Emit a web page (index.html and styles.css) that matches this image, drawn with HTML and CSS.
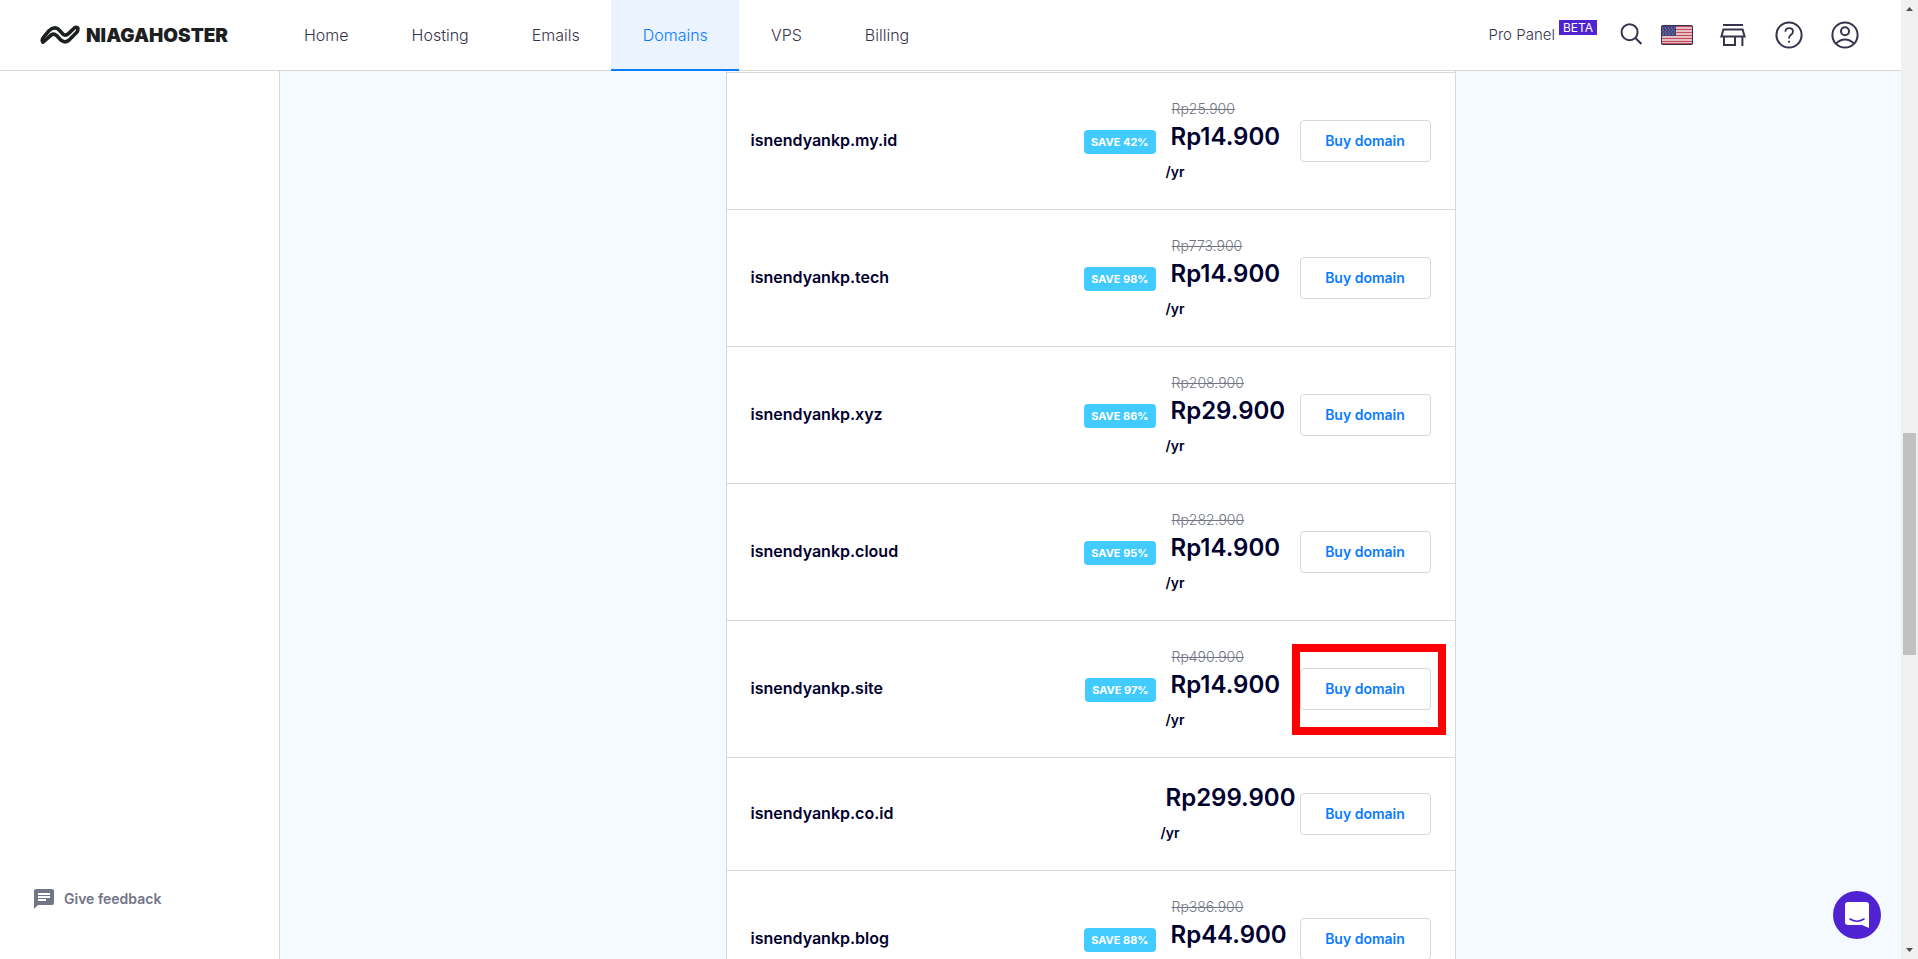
FILE: index.html
```html
<!DOCTYPE html>
<html lang="en">
<head>
<meta charset="utf-8">
<title>Niagahoster - Domains</title>
<link rel="stylesheet" href="styles.css">
</head>
<body>
<div class="app">
  <header class="header">
    <a class="logo" href="#" aria-label="Niagahoster">
      <svg class="logo-mark" viewBox="0 0 40 20" fill="none" stroke="#1d2021" stroke-width="3.6" stroke-linecap="round" stroke-linejoin="round">
        <path d="M2.200 15.400Q2 14 4 11.600L9 5.800Q14 .6 18.600 4.400L23.400 9.400Q25.800 11 28.200 8.800L34.600 2.800Q36 2 37.600 3"/>
        <path d="M3 17.200 11.400 9.800Q14 8.200 16.600 10.600L21 15.200Q25.400 18.600 29.600 14.600L36.600 7.600Q38.400 5.400 37.600 3"/>
      </svg>
      <span class="logo-text">NIAGAHOSTER</span>
    </a>
    <nav class="nav">
      <a class="nav-item" href="#">Home</a>
      <a class="nav-item" href="#">Hosting</a>
      <a class="nav-item" href="#">Emails</a>
      <a class="nav-item nav-item-active" href="#">Domains</a>
      <a class="nav-item" href="#">VPS</a>
      <a class="nav-item" href="#">Billing</a>
    </nav>
    <div class="tools">
      <a class="pro" href="#">Pro Panel <span class="beta">BETA</span></a>
      <button class="tool tool-search" type="button" aria-label="Search">
        <svg viewBox="0 0 28 28" fill="none" stroke="#36344d" stroke-width="2"><circle cx="12.6" cy="11.2" r="8"/><path d="m18.4 17 6 6"/></svg>
      </button>
      <button class="tool tool-flag" type="button" aria-label="Language">
        <svg viewBox="0 0 32 20">
          <rect width="32" height="20" rx="2" fill="#f3e3e6"/>
          <path stroke="#c34c5c" stroke-width="1.5" d="M0 1.6h32M0 4.6h32M0 7.6h32M0 10.6h32M0 13.6h32M0 16.6h32M0 18.8h32"/>
          <path fill="#46467f" d="M0 1h15v10H0z"/>
          <path stroke="#8f8fb8" stroke-dasharray="1 2" d="M1 3h13M2 5h12M1 7h13M2 9h12"/>
          <rect x=".5" y=".5" width="31" height="19" rx="1.5" fill="none" stroke="#36344d"/>
        </svg>
      </button>
      <button class="tool tool-store" type="button" aria-label="Store">
        <svg viewBox="0 0 28 28" fill="none" stroke="#36344d" stroke-width="2"><path d="M4 4h20M4.400 8.600h19.200l2 7H2.400zM5 15.600V24h11v-8.400M23.400 15.600V25"/></svg>
      </button>
      <button class="tool" type="button" aria-label="Help">
        <svg viewBox="0 0 28 28" fill="none" stroke="#36344d" stroke-width="2"><circle cx="14" cy="14" r="12.6"/><path stroke-width="1.8" d="M10.4 10.8Q10.4 7.2 14.2 7.2T18 10.6Q18 12.4 16 13.8T14 17.4M14 19.8v2"/></svg>
      </button>
      <button class="tool" type="button" aria-label="Account">
        <svg viewBox="0 0 28 28" fill="none" stroke="#36344d" stroke-width="2"><circle cx="14" cy="14" r="12.6"/><circle cx="14" cy="10.2" r="4"/><path d="M5.2 22.4Q9 18.4 14 18.4t8.8 4"/></svg>
      </button>
    </div>
  </header>

  <aside class="sidebar">
    <a class="feedback" href="#">
      <svg viewBox="0 0 20 20" width="20" height="20"><path fill="#727586" d="M2 0h16a2 2 0 0 1 2 2v12a2 2 0 0 1-2 2H4l-4 4V2a2 2 0 0 1 2-2z"/><path stroke="#fff" stroke-width="1.8" d="M4 5h12M4 8h12M4 11h8"/></svg>
      Give feedback
    </a>
  </aside>

  <main class="main">
    <ul class="domains">
      <li class="row">
        <span class="name">isnendyankp.my.id</span><span class="save">SAVE 42%</span>
        <div class="price"><s class="old">Rp25.900</s><strong class="now">Rp14.900</strong><span class="per">/yr</span></div>
        <div class="action"><button class="buy" type="button">Buy domain</button></div>
      </li>
      <li class="row">
        <span class="name">isnendyankp.tech</span><span class="save">SAVE 98%</span>
        <div class="price"><s class="old">Rp773.900</s><strong class="now">Rp14.900</strong><span class="per">/yr</span></div>
        <div class="action"><button class="buy" type="button">Buy domain</button></div>
      </li>
      <li class="row">
        <span class="name">isnendyankp.xyz</span><span class="save">SAVE 86%</span>
        <div class="price"><s class="old">Rp208.900</s><strong class="now">Rp29.900</strong><span class="per">/yr</span></div>
        <div class="action"><button class="buy" type="button">Buy domain</button></div>
      </li>
      <li class="row">
        <span class="name">isnendyankp.cloud</span><span class="save">SAVE 95%</span>
        <div class="price"><s class="old">Rp282.900</s><strong class="now">Rp14.900</strong><span class="per">/yr</span></div>
        <div class="action"><button class="buy" type="button">Buy domain</button></div>
      </li>
      <li class="row">
        <span class="name">isnendyankp.site</span><span class="save">SAVE 97%</span>
        <div class="price"><s class="old">Rp490.900</s><strong class="now">Rp14.900</strong><span class="per">/yr</span></div>
        <div class="action action-marked"><button class="buy" type="button">Buy domain</button></div>
      </li>
      <li class="row">
        <span class="name">isnendyankp.co.id</span>
        <div class="price price-plain"><strong class="now">Rp299.900</strong><span class="per">/yr</span></div>
        <div class="action"><button class="buy" type="button">Buy domain</button></div>
      </li>
      <li class="row">
        <span class="name">isnendyankp.blog</span><span class="save">SAVE 88%</span>
        <div class="price"><s class="old">Rp386.900</s><strong class="now">Rp44.900</strong></div>
        <div class="action"><button class="buy" type="button">Buy domain</button></div>
      </li>
    </ul>
  </main>

  <div class="scrollbar" aria-hidden="true">
    <svg class="arrow" viewBox="0 0 17 17"><path fill="#505050" d="M5 11h7L8.500 7z"/></svg>
    <div class="track"><div class="thumb"></div></div>
    <svg class="arrow" viewBox="0 0 17 17"><path fill="#505050" d="M5 6h7L8.500 10z"/></svg>
  </div>

  <button class="chat" type="button" aria-label="Open chat">
    <svg viewBox="0 0 48 48"><path fill="#fff" d="M15 11h18a3 3 0 0 1 3 3v23l-7-3H15a3 3 0 0 1-3-3V14a3 3 0 0 1 3-3z"/><path fill="none" stroke="#4f23d1" stroke-width="1.600" stroke-linecap="round" d="M17 28q7 4.600 14 0"/></svg>
  </button>
</div>
</body>
</html>
```
FILE: styles.css
```css
* {
  box-sizing: border-box;
}

body {
  margin: 0;
  font-family: Inter, "Liberation Sans", sans-serif;
  color: #00002e;
}

a {
  color: inherit;
  text-decoration: none;
}

button {
  font-family: inherit;
  cursor: pointer;
}

svg {
  display: block;
}

.app {
  display: grid;
  grid-template-columns: 280px 1fr 17px;
  grid-template-rows: auto 1fr;
  height: 100vh;
  overflow: hidden;
}

.header {
  grid-column: 1 / 3;
  display: flex;
  height: 71px;
  padding-right: 42px;
  border-bottom: 1px solid #d8d8d8;
  background: #fff;
}

.logo {
  display: flex;
  align-items: center;
  gap: 6px;
  width: 272px;
  padding-left: 40px;
}

.logo-mark {
  width: 40px;
  height: 20px;
}

.logo-text {
  font-size: 19px;
  font-weight: 900;
  color: #1d2021;
}

.nav {
  display: flex;
  margin-bottom: -1px;
}

.nav-item {
  display: flex;
  align-items: center;
  padding: 0 31px 2px 32px;
  font-size: 16px;
  font-weight: 300;
  color: #36344d;
}

.nav-item-active {
  border-bottom: 2px solid #0a7cff;
  padding-bottom: 0;
  background: #ebf3ff;
  color: #0a7cff;
}

.tools {
  display: flex;
  align-items: center;
  margin-left: auto;
}

.pro {
  display: flex;
  align-items: center;
  gap: 4px;
  padding-bottom: 2px;
  font-size: 15px;
  font-weight: 300;
  color: #36344d;
}

.beta {
  margin-bottom: 14px;
  padding: 0 4px;
  background: #4f23d1;
  color: #fff;
  font-size: 12px;
  line-height: 15px;
  font-weight: 400;
}

.tool {
  width: 28px;
  height: 28px;
  margin-left: 28px;
  padding: 0;
  border: 0;
  background: none;
}

.tool-search {
  margin-left: 20px;
}

.tool-flag {
  width: 32px;
  height: 20px;
  margin-left: 16px;
}

.tool-store {
  margin-left: 26px;
}

.sidebar {
  display: flex;
  align-items: flex-end;
  border-right: 1px solid #d8d8d8;
  padding: 0 34px 48px;
}

.feedback {
  display: flex;
  align-items: center;
  gap: 10px;
  font-size: 14px;
  line-height: 24px;
  font-weight: 600;
  color: #727586;
}

.main {
  overflow: hidden;
  background: #f4faff;
}

.domains {
  width: 90%;
  max-width: 730px;
  margin: 0 auto;
  padding: 1px 0 0;
  list-style: none;
  border: solid #d8d8d8;
  border-width: 0 1px;
  background: #fff;
}

.row {
  display: flex;
  align-items: center;
  padding: 24px;
  border-top: 1px solid #d8d8d8;
}

.name {
  margin-right: auto;
  padding-bottom: 2px;
  font-size: 16px;
  font-weight: 600;
}

.save {
  margin-top: 2px;
  padding: 0 7px;
  border-radius: 4px;
  background: #42cbff;
  color: #fff;
  font-size: 11px;
  line-height: 24px;
  font-weight: 700;
}

.price {
  display: flex;
  flex-direction: column;
  align-items: flex-start;
  width: 134px;
  min-height: 88px;
  margin-left: 10px;
}

.price-plain {
  width: 139px;
  min-height: 64px;
}

.old {
  margin-left: 6px;
  font-size: 14px;
  line-height: 24px;
  font-weight: 300;
  color: #727586;
}

.now {
  margin-left: 5px;
  font-size: 24px;
  line-height: 32px;
  font-weight: 600;
}

.per {
  padding-top: 7px;
  font-size: 14px;
  line-height: 24px;
  font-weight: 600;
}

.action {
  position: relative;
}

.action-marked::after {
  content: "";
  position: absolute;
  inset: -24px -15px -25px -8px;
  border: 8px solid #f00;
  pointer-events: none;
}

.buy {
  display: block;
  width: 131px;
  height: 42px;
  padding: 0 0 1px;
  border: 1px solid #d8d8d8;
  border-radius: 4px;
  background: #fff;
  color: #0a7cff;
  font-size: 14px;
  font-weight: 600;
}

.scrollbar {
  grid-column: 3;
  grid-row: 1 / 3;
  display: flex;
  flex-direction: column;
  background: #f0f0f0;
}

.arrow {
  width: 17px;
  height: 17px;
}

.track {
  flex: 1;
  padding: 0 2px;
}

.track::before {
  content: "";
  display: block;
  height: 45%;
}

.thumb {
  height: 24%;
  background: #c1c1c1;
}

.chat {
  position: fixed;
  right: 37px;
  bottom: 20px;
  width: 48px;
  height: 48px;
  padding: 0;
  border: 0;
  border-radius: 50%;
  background: #4f23d1;
}
```
